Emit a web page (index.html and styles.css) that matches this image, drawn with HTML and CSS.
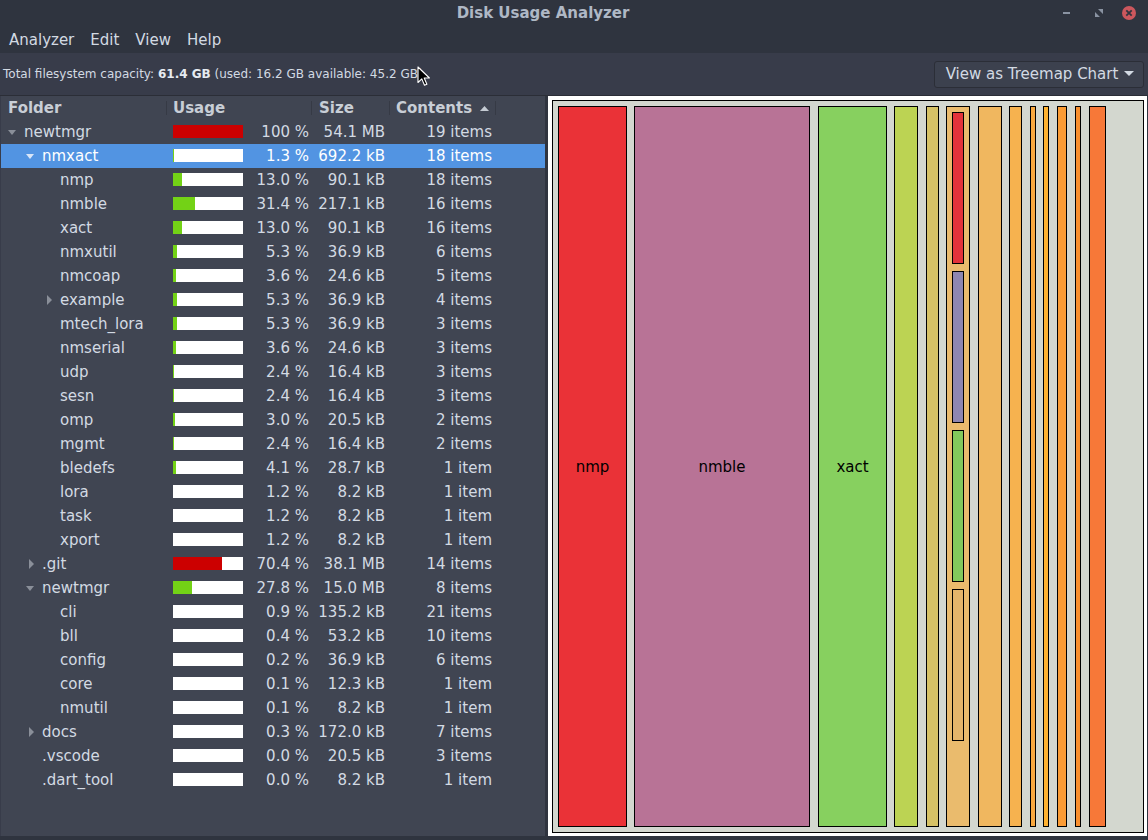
FILE: index.html
```html
<!DOCTYPE html>
<html lang="en">
<head>
<meta charset="utf-8">
<title>Disk Usage Analyzer</title>
<link rel="stylesheet" href="styles.css">
</head>
<body>
<div class="window">
  <header class="titlebar">
    <div class="title">Disk Usage Analyzer</div>
    <div class="controls">
      <span class="ctl min"><svg width="10" height="10" viewBox="0 0 10 10"><rect x="1" y="4" width="7" height="2" fill="#8a93a2"/></svg></span>
      <span class="ctl max"><svg width="10" height="10" viewBox="0 0 10 10"><path d="M4 1h5v5z M1 9V4l5 5z" fill="#8a93a2"/></svg></span>
      <span class="ctl close"><svg width="16" height="16" viewBox="0 0 16 16"><circle cx="8" cy="8" r="7" fill="#cc575d"/><path d="M5.3 5.3l5.4 5.4M10.7 5.3l-5.4 5.4" stroke="#2f343f" stroke-width="1.8"/></svg></span>
    </div>
  </header>
  <nav class="menubar">
    <span class="menu">Analyzer</span>
    <span class="menu">Edit</span>
    <span class="menu">View</span>
    <span class="menu">Help</span>
  </nav>
  <div class="infobar">
    <span class="capacity">Total filesystem capacity: <b>61.4 GB</b> (used: 16.2 GB available: 45.2 GB)</span>
    <button class="view-btn">View as Treemap Chart <svg width="10" height="6" viewBox="0 0 10 6"><path d="M0 0h10L5 5z" fill="#d3dae3"/></svg></button>
    <svg class="cursor" width="13" height="21" viewBox="0 0 13 21"><path d="M1 1v15.5l3.8-3.6 2.7 6.3 2.4-1-2.7-6.2h5.2z" fill="#000" stroke="#fff" stroke-width="1.1" stroke-linejoin="round"/></svg>
  </div>
  <div class="main">
    <div class="tree">
      <div class="thead">
        <div class="th c-folder">Folder</div>
        <div class="th c-usage">Usage</div>
        <div class="th c-size">Size</div>
        <div class="th c-contents">Contents <svg width="9" height="5" viewBox="0 0 9 5"><path d="M0 5h9L4.5 0z" fill="#c5cbd3"/></svg></div>
      </div>

      <div class="row lvl0"><div class="c-folder"><span class="exp down"></span>newtmgr</div><div class="c-usage"><span class="bar"><span class="fill red" style="width:100%"></span></span><span class="pct">100 %</span></div><div class="c-size">54.1 MB</div><div class="c-contents">19 items</div></div>
      <div class="row lvl1 selected"><div class="c-folder"><span class="exp down"></span>nmxact</div><div class="c-usage"><span class="bar"><span class="fill" style="width:1.3%"></span></span><span class="pct">1.3 %</span></div><div class="c-size">692.2 kB</div><div class="c-contents">18 items</div></div>
      <div class="row lvl2"><div class="c-folder"><span class="exp"></span>nmp</div><div class="c-usage"><span class="bar"><span class="fill" style="width:13%"></span></span><span class="pct">13.0 %</span></div><div class="c-size">90.1 kB</div><div class="c-contents">18 items</div></div>
      <div class="row lvl2"><div class="c-folder"><span class="exp"></span>nmble</div><div class="c-usage"><span class="bar"><span class="fill" style="width:31.4%"></span></span><span class="pct">31.4 %</span></div><div class="c-size">217.1 kB</div><div class="c-contents">16 items</div></div>
      <div class="row lvl2"><div class="c-folder"><span class="exp"></span>xact</div><div class="c-usage"><span class="bar"><span class="fill" style="width:13%"></span></span><span class="pct">13.0 %</span></div><div class="c-size">90.1 kB</div><div class="c-contents">16 items</div></div>
      <div class="row lvl2"><div class="c-folder"><span class="exp"></span>nmxutil</div><div class="c-usage"><span class="bar"><span class="fill" style="width:5.3%"></span></span><span class="pct">5.3 %</span></div><div class="c-size">36.9 kB</div><div class="c-contents">6 items</div></div>
      <div class="row lvl2"><div class="c-folder"><span class="exp"></span>nmcoap</div><div class="c-usage"><span class="bar"><span class="fill" style="width:3.6%"></span></span><span class="pct">3.6 %</span></div><div class="c-size">24.6 kB</div><div class="c-contents">5 items</div></div>
      <div class="row lvl2"><div class="c-folder"><span class="exp right"></span>example</div><div class="c-usage"><span class="bar"><span class="fill" style="width:5.3%"></span></span><span class="pct">5.3 %</span></div><div class="c-size">36.9 kB</div><div class="c-contents">4 items</div></div>
      <div class="row lvl2"><div class="c-folder"><span class="exp"></span>mtech_lora</div><div class="c-usage"><span class="bar"><span class="fill" style="width:5.3%"></span></span><span class="pct">5.3 %</span></div><div class="c-size">36.9 kB</div><div class="c-contents">3 items</div></div>
      <div class="row lvl2"><div class="c-folder"><span class="exp"></span>nmserial</div><div class="c-usage"><span class="bar"><span class="fill" style="width:3.6%"></span></span><span class="pct">3.6 %</span></div><div class="c-size">24.6 kB</div><div class="c-contents">3 items</div></div>
      <div class="row lvl2"><div class="c-folder"><span class="exp"></span>udp</div><div class="c-usage"><span class="bar"><span class="fill" style="width:1%"></span></span><span class="pct">2.4 %</span></div><div class="c-size">16.4 kB</div><div class="c-contents">3 items</div></div>
      <div class="row lvl2"><div class="c-folder"><span class="exp"></span>sesn</div><div class="c-usage"><span class="bar"><span class="fill" style="width:1%"></span></span><span class="pct">2.4 %</span></div><div class="c-size">16.4 kB</div><div class="c-contents">3 items</div></div>
      <div class="row lvl2"><div class="c-folder"><span class="exp"></span>omp</div><div class="c-usage"><span class="bar"><span class="fill" style="width:3%"></span></span><span class="pct">3.0 %</span></div><div class="c-size">20.5 kB</div><div class="c-contents">2 items</div></div>
      <div class="row lvl2"><div class="c-folder"><span class="exp"></span>mgmt</div><div class="c-usage"><span class="bar"><span class="fill" style="width:1%"></span></span><span class="pct">2.4 %</span></div><div class="c-size">16.4 kB</div><div class="c-contents">2 items</div></div>
      <div class="row lvl2"><div class="c-folder"><span class="exp"></span>bledefs</div><div class="c-usage"><span class="bar"><span class="fill" style="width:4.1%"></span></span><span class="pct">4.1 %</span></div><div class="c-size">28.7 kB</div><div class="c-contents">1 item</div></div>
      <div class="row lvl2"><div class="c-folder"><span class="exp"></span>lora</div><div class="c-usage"><span class="bar"><span class="fill" style="width:0%"></span></span><span class="pct">1.2 %</span></div><div class="c-size">8.2 kB</div><div class="c-contents">1 item</div></div>
      <div class="row lvl2"><div class="c-folder"><span class="exp"></span>task</div><div class="c-usage"><span class="bar"><span class="fill" style="width:0%"></span></span><span class="pct">1.2 %</span></div><div class="c-size">8.2 kB</div><div class="c-contents">1 item</div></div>
      <div class="row lvl2"><div class="c-folder"><span class="exp"></span>xport</div><div class="c-usage"><span class="bar"><span class="fill" style="width:0%"></span></span><span class="pct">1.2 %</span></div><div class="c-size">8.2 kB</div><div class="c-contents">1 item</div></div>
      <div class="row lvl1"><div class="c-folder"><span class="exp right"></span>.git</div><div class="c-usage"><span class="bar"><span class="fill red" style="width:70.4%"></span></span><span class="pct">70.4 %</span></div><div class="c-size">38.1 MB</div><div class="c-contents">14 items</div></div>
      <div class="row lvl1"><div class="c-folder"><span class="exp down"></span>newtmgr</div><div class="c-usage"><span class="bar"><span class="fill" style="width:27.8%"></span></span><span class="pct">27.8 %</span></div><div class="c-size">15.0 MB</div><div class="c-contents">8 items</div></div>
      <div class="row lvl2"><div class="c-folder"><span class="exp"></span>cli</div><div class="c-usage"><span class="bar"><span class="fill" style="width:0%"></span></span><span class="pct">0.9 %</span></div><div class="c-size">135.2 kB</div><div class="c-contents">21 items</div></div>
      <div class="row lvl2"><div class="c-folder"><span class="exp"></span>bll</div><div class="c-usage"><span class="bar"><span class="fill" style="width:0%"></span></span><span class="pct">0.4 %</span></div><div class="c-size">53.2 kB</div><div class="c-contents">10 items</div></div>
      <div class="row lvl2"><div class="c-folder"><span class="exp"></span>config</div><div class="c-usage"><span class="bar"><span class="fill" style="width:0%"></span></span><span class="pct">0.2 %</span></div><div class="c-size">36.9 kB</div><div class="c-contents">6 items</div></div>
      <div class="row lvl2"><div class="c-folder"><span class="exp"></span>core</div><div class="c-usage"><span class="bar"><span class="fill" style="width:0%"></span></span><span class="pct">0.1 %</span></div><div class="c-size">12.3 kB</div><div class="c-contents">1 item</div></div>
      <div class="row lvl2"><div class="c-folder"><span class="exp"></span>nmutil</div><div class="c-usage"><span class="bar"><span class="fill" style="width:0%"></span></span><span class="pct">0.1 %</span></div><div class="c-size">8.2 kB</div><div class="c-contents">1 item</div></div>
      <div class="row lvl1"><div class="c-folder"><span class="exp right"></span>docs</div><div class="c-usage"><span class="bar"><span class="fill" style="width:0%"></span></span><span class="pct">0.3 %</span></div><div class="c-size">172.0 kB</div><div class="c-contents">7 items</div></div>
      <div class="row lvl1"><div class="c-folder"><span class="exp"></span>.vscode</div><div class="c-usage"><span class="bar"><span class="fill" style="width:0%"></span></span><span class="pct">0.0 %</span></div><div class="c-size">20.5 kB</div><div class="c-contents">3 items</div></div>
      <div class="row lvl1"><div class="c-folder"><span class="exp"></span>.dart_tool</div><div class="c-usage"><span class="bar"><span class="fill" style="width:0%"></span></span><span class="pct">0.0 %</span></div><div class="c-size">8.2 kB</div><div class="c-contents">1 item</div></div>
    </div>

    <div class="chart">
      <div class="frame">
        <div class="cell" style="left:5px;width:69px;background:#ea3237"><span class="label">nmp</span></div>
        <div class="cell" style="left:81px;width:176px;background:#b87396"><span class="label">nmble</span></div>
        <div class="cell" style="left:265px;width:69px;background:#87d05f"><span class="label">xact</span></div>
        <div class="cell" style="left:341px;width:24px;background:#bcd353"></div>
        <div class="cell" style="left:373px;width:13px;background:#d6c266"></div>
        <div class="cell" style="left:393px;width:24px;background:#eabb6d">
          <div class="sub" style="top:5px;background:#e3333b"></div>
          <div class="sub" style="top:164px;background:#8e86b0"></div>
          <div class="sub" style="top:323px;background:#83c95c"></div>
          <div class="sub" style="top:482px;background:#e4b56b"></div>
        </div>
        <div class="cell" style="left:425px;width:24px;background:#f0b75f"></div>
        <div class="cell" style="left:456px;width:13px;background:#f6b24f"></div>
        <div class="cell" style="left:477px;width:6px;background:#f9a83f"></div>
        <div class="cell" style="left:490px;width:6px;background:#ffb230"></div>
        <div class="cell" style="left:504px;width:10px;background:#fb9c35"></div>
        <div class="cell" style="left:522px;width:6px;background:#f88f2f"></div>
        <div class="cell" style="left:536px;width:17px;background:#f77838"></div>
      </div>
    </div>
  </div>
</div>
</body>
</html>
```

FILE: styles.css
```css
* { box-sizing: border-box; }
html, body { margin: 0; padding: 0; }
body {
  width: 1148px;
  height: 840px;
  overflow: hidden;
  background: #2f343f;
  font-family: "DejaVu Sans", "Liberation Sans", sans-serif;
  font-size: 15px;
  color: #d3dae3;
}
.window { width: 1148px; height: 840px; display: flex; flex-direction: column; }

.titlebar {
  height: 27px;
  display: flex;
  align-items: center;
  position: relative;
  background: #2f343f;
}
.title {
  flex: 1;
  text-align: center;
  padding-right: 62px;
  font-weight: bold;
  font-size: 15px;
  color: #afb8c5;
  line-height: 27px;
}
.controls {
  position: absolute;
  right: 11px;
  top: 5px;
  display: flex;
  align-items: center;
  gap: 0;
}
.ctl { display: flex; align-items: center; justify-content: center; height: 16px; }
.ctl.min { width: 12px; margin-right: 20px; }
.ctl.max { width: 12px; margin-right: 16px; }
.ctl.close { width: 16px; }

.menubar {
  height: 26px;
  display: flex;
  align-items: center;
  padding-left: 1px;
  background: #2f343f;
}
.menu { padding: 0 8px; line-height: 26px; color: #d3dae3; }

.infobar {
  height: 43px;
  background: #383c4a;
  border-bottom: 1px solid #2b2e37;
  display: flex;
  align-items: center;
  justify-content: space-between;
  padding: 0 4px 0 3px;
  position: relative;
}
.capacity { font-size: 12px; color: #d3dae3; }
.capacity b { color: #e6ebf1; }
.view-btn {
  height: 27px;
  width: 210px;
  margin-top: 0;
  background: #3c414e;
  border: 1px solid #2b2e37;
  border-radius: 3px;
  color: #d3dae3;
  font-family: "DejaVu Sans", sans-serif;
  font-size: 15px;
  display: flex;
  align-items: center;
  justify-content: center;
  gap: 6px;
  padding: 0 0 0 2px;
}
.cursor { position: absolute; left: 417px; top: 13px; }

.main {
  height: 740px;
  display: flex;
  gap: 3px;
}

/* tree */
.tree {
  width: 545px;
  background: #404552;
  border-left: 1px solid #383c4a;
}
.thead {
  height: 24px;
  display: flex;
  align-items: center;
  font-weight: bold;
  color: #c8ced6;
}
.th { position: relative; line-height: 24px; height: 24px; }
.th::after {
  content: "";
  position: absolute;
  right: 0;
  top: 5px;
  width: 1px;
  height: 14px;
  background: #363a45;
}
.thead .c-folder { width: 166px; padding-left: 7px; }
.thead .c-usage { width: 145px; padding-left: 6px; }
.thead .c-size { width: 78px; padding-left: 7px; text-align: left; }
.thead .c-contents { width: 106px; padding-left: 6px; text-align: left; display: flex; align-items: center; gap: 8px; }

.row {
  height: 24px;
  display: flex;
  align-items: center;
  line-height: 24px;
  white-space: nowrap;
}
.row.selected { background: #5294e2; color: #ffffff; }
.row .c-folder { width: 166px; display: flex; align-items: center; }
.row.lvl0 .c-folder { padding-left: 5px; }
.row.lvl1 .c-folder { padding-left: 23px; }
.row.lvl2 .c-folder { padding-left: 41px; }
.exp { width: 13px; height: 24px; margin-right: 5px; position: relative; flex: none; }
.exp.down::before {
  content: "";
  position: absolute;
  left: 2px;
  top: 10px;
  border-left: 4.5px solid transparent;
  border-right: 4.5px solid transparent;
  border-top: 5px solid #8a8f99;
}
.exp.right::before {
  content: "";
  position: absolute;
  left: 5px;
  top: 7px;
  border-top: 5px solid transparent;
  border-bottom: 5px solid transparent;
  border-left: 5px solid #8a8f99;
}
.row.selected .exp.down::before { border-top-color: #d9e6f8; }

.row .c-usage { width: 146px; display: flex; align-items: center; padding-left: 6px; padding-right: 4px; }
.bar {
  width: 70px;
  height: 13px;
  background: #ffffff;
  display: flex;
  flex: none;
  margin-top: -1px;
}
.fill { height: 100%; background: #73d216; }
.fill.red { background: #cc0000; }
.pct { flex: 1; text-align: right; }
.row .c-size { width: 77px; text-align: right; padding-right: 5px; }
.row .c-contents { width: 106px; text-align: right; padding-right: 4px; }

/* chart */
.chart {
  width: 599px;
  background: #ffffff;
  padding: 4px 3px 3px 4px;
}
.frame {
  position: relative;
  width: 592px;
  height: 733px;
  border: 1px solid #000;
  background: #d3d7cf;
}
.cell {
  position: absolute;
  top: 5px;
  height: 721px;
  border: 1px solid #000;
  display: flex;
  align-items: center;
  justify-content: center;
}
.label { color: #000; font-size: 15px; }
.sub {
  position: absolute;
  left: 5px;
  width: 12px;
  height: 152px;
  border: 1px solid #000;
}
```
